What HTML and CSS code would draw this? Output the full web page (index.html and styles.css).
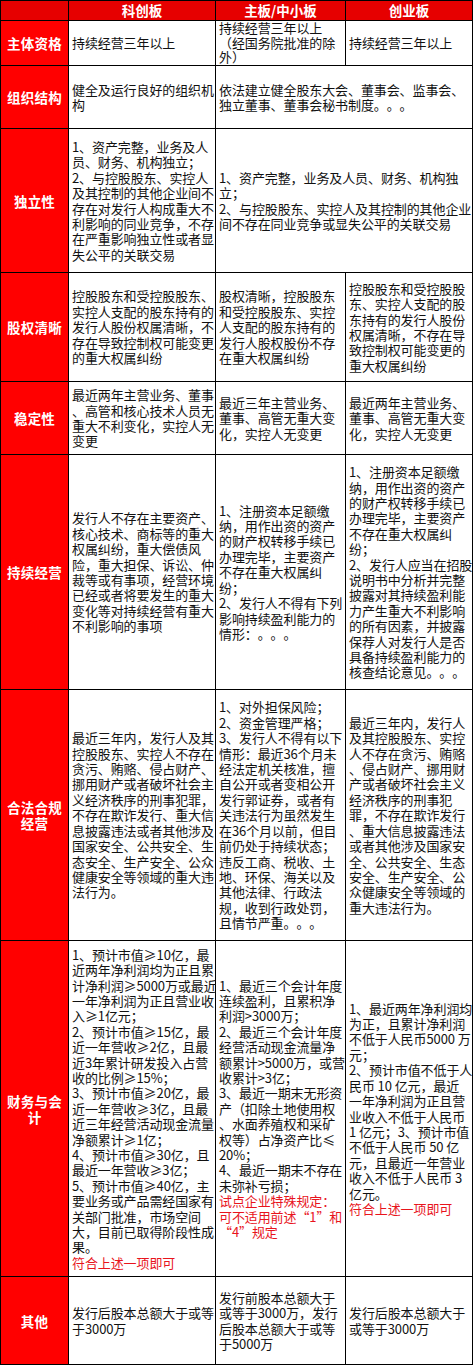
FILE: index.html
```html
<!DOCTYPE html>
<html lang="zh-CN">
<head>
<meta charset="utf-8">
<title>科创板 主板 创业板 对比</title>
<link rel="stylesheet" href="styles.css">
</head>
<body>
<div class="sheet">
  <div class="hd"></div>
  <div class="hd">科创板</div>
  <div class="hd">主板/中小板</div>
  <div class="hd">创业板</div>

  <div class="lbl"><div class="t">主体资格</div></div>
  <div class="c"><div class="t">持续经营三年以上</div></div>
  <div class="c tight"><div class="t">持续经营三年以上<br>（经国务院批准的除<br>外）</div></div>
  <div class="c"><div class="t">持续经营三年以上</div></div>

  <div class="lbl"><div class="t">组织结构</div></div>
  <div class="c"><div class="t">健全及运行良好的组织机<br>构</div></div>
  <div class="c span2"><div class="t">依法建立健全股东大会、董事会、监事会、<br>独立董事、董事会秘书制度。。。</div></div>

  <div class="lbl"><div class="t">独立性</div></div>
  <div class="c"><div class="t">1、资产完整，业务及人<br>员、财务、机构独立；<br>2、与控股股东、实控人<br>及其控制的其他企业间不<br>存在对发行人构成重大不<br>利影响的同业竞争，不存<br>在严重影响独立性或者显<br>失公平的关联交易</div></div>
  <div class="c span2"><div class="t">1、资产完整，业务及人员、财务、机构独<br>立；<br>2、与控股股东、实控人及其控制的其他企业<br>间不存在同业竞争或显失公平的关联交易</div></div>

  <div class="lbl"><div class="t">股权清晰</div></div>
  <div class="c"><div class="t">控股股东和受控股股东、<br>实控人支配的股东持有的<br>发行人股份权属清晰，不<br>存在导致控制权可能变更<br>的重大权属纠纷</div></div>
  <div class="c"><div class="t">股权清晰，控股股东<br>和受控股股东、实控<br>人支配的股东持有的<br>发行人股权股份不存<br>在重大权属纠纷</div></div>
  <div class="c"><div class="t">控股股东和受控股股<br>东、实控人支配的股<br>东持有的发行人股份<br>权属清晰，不存在导<br>致控制权可能变更的<br>重大权属纠纷</div></div>

  <div class="lbl"><div class="t">稳定性</div></div>
  <div class="c"><div class="t">最近两年主营业务、董事<br>、高管和核心技术人员无<br>重大不利变化，实控人无<br>变更</div></div>
  <div class="c"><div class="t">最近三年主营业务、<br>董事、高管无重大变<br>化，实控人无变更</div></div>
  <div class="c"><div class="t">最近两年主营业务、<br>董事、高管无重大变<br>化，实控人无变更</div></div>

  <div class="lbl"><div class="t">持续经营</div></div>
  <div class="c"><div class="t">发行人不存在主要资产、<br>核心技术、商标等的重大<br>权属纠纷，重大偿债风<br>险，重大担保、诉讼、仲<br>裁等或有事项，经营环境<br>已经或者将要发生的重大<br>变化等对持续经营有重大<br>不利影响的事项</div></div>
  <div class="c"><div class="t">1、注册资本足额缴<br>纳，用作出资的资产<br>的财产权转移手续已<br>办理完毕，主要资产<br>不存在重大权属纠<br>纷；<br>2、发行人不得有下列<br>影响持续盈利能力的<br>情形：。。。</div></div>
  <div class="c"><div class="t">1、注册资本足额缴<br>纳，用作出资的资产<br>的财产权转移手续已<br>办理完毕，主要资产<br>不存在重大权属纠<br>纷；<br>2、发行人应当在招股<br>说明书中分析并完整<br>披露对其持续盈利能<br>力产生重大不利影响<br>的所有因素，并披露<br>保荐人对发行人是否<br>具备持续盈利能力的<br>核查结论意见。。。</div></div>

  <div class="lbl"><div class="t">合法合规<br>经营</div></div>
  <div class="c"><div class="t">最近三年内，发行人及其<br>控股股东、实控人不存在<br>贪污、贿赂、侵占财产、<br>挪用财产或者破坏社会主<br>义经济秩序的刑事犯罪，<br>不存在欺诈发行、重大信<br>息披露违法或者其他涉及<br>国家安全、公共安全、生<br>态安全、生产安全、公众<br>健康安全等领域的重大违<br>法行为。</div></div>
  <div class="c"><div class="t">1、对外担保风险；<br>2、资金管理严格；<br>3、发行人不得有以下<br>情形：最近36个月未<br>经法定机关核准，擅<br>自公开或者变相公开<br>发行郭证券，或者有<br>关违法行为虽然发生<br>在36个月以前，但目<br>前仍处于持续状态；<br>违反工商、税收、土<br>地、环保、海关以及<br>其他法律、行政法<br>规，收到行政处罚，<br>且情节严重。。。</div></div>
  <div class="c"><div class="t">最近三年内，发行人<br>及其控股股东、实控<br>人不存在贪污、贿赂<br>、侵占财产、挪用财<br>产或者破坏社会主义<br>经济秩序的刑事犯<br>罪，不存在欺诈发行<br>、重大信息披露违法<br>或者其他涉及国家安<br>全、公共安全、生态<br>安全、生产安全、公<br>众健康安全等领域的<br>重大违法行为。</div></div>

  <div class="lbl"><div class="t">财务与会<br>计</div></div>
  <div class="c"><div class="t">1、预计市值≥10亿，最<br>近两年净利润均为正且累<br>计净利润≥5000万或最近<br>一年净利润为正且营业收<br>入≥1亿元；<br>2、预计市值≥15亿，最<br>近一年营收≥2亿，且最<br>近3年累计研发投入占营<br>收的比例≥15%；<br>3、预计市值≥20亿，最<br>近一年营收≥3亿，且最<br>近三年经营活动现金流量<br>净额累计≥1亿；<br>4、预计市值≥30亿，且<br>最近一年营收≥3亿；<br>5、预计市值≥40亿，主<br>要业务或产品需经国家有<br>关部门批准，市场空间<br>大，目前已取得阶段性成<br>果。<br><span class="red">符合上述一项即可</span></div></div>
  <div class="c"><div class="t">1、最近三个会计年度<br>连续盈利，且累积净<br>利润&gt;3000万；<br>2、最近三个会计年度<br>经营活动现金流量净<br>额累计&gt;5000万，或营<br>收累计&gt;3亿；<br>3、最近一期末无形资<br>产（扣除土地使用权<br>、水面养殖权和采矿<br>权等）占净资产比≤<br>20%；<br>4、最近一期末不存在<br>未弥补亏损；<br><span class="red">试点企业特殊规定：<br>可不适用前述“1”和<br>“4”规定</span></div></div>
  <div class="c"><div class="t">1、最近两年净利润均<br>为正，且累计净利润<br>不低于人民币5000 万<br>元；<br>2、预计市值不低于人<br>民币 10 亿元，最近<br>一年净利润为正且营<br>业收入不低于人民币<br>1 亿元；3、预计市值<br>不低于人民币 50 亿<br>元，且最近一年营业<br>收入不低于人民币 3<br>亿元。<br><span class="red">符合上述一项即可</span></div></div>

  <div class="lbl"><div class="t">其他</div></div>
  <div class="c"><div class="t">发行后股本总额大于或等<br>于3000万</div></div>
  <div class="c"><div class="t">发行前股本总额大于<br>或等于3000万，发行<br>后股本总额大于或等<br>于5000万</div></div>
  <div class="c"><div class="t">发行后股本总额大于<br>或等于3000万</div></div>
</div>
</body>
</html>
```

FILE: styles.css
```css
html, body {
  margin: 0;
  padding: 0;
  background: #ffffff;
}

.sheet {
  width: 471px;
  display: grid;
  grid-template-columns: 67px 146px 129px 126px;
  grid-template-rows: 19px 44px 62px 143px 108px 72px 234px 250px 335px 87px;
  gap: 1px;
  padding: 1px;
  background: #000000;
  font-family: "Noto Sans CJK SC", "Noto Sans", sans-serif;
  text-spacing-trim: space-all;
}

.hd {
  background: #e60000;
  color: #ffffff;
  font-weight: 700;
  font-size: 13.5px;
  line-height: 19px;
  text-align: center;
  white-space: nowrap;
}

.lbl {
  background: #ff0000;
  color: #ffffff;
  font-weight: 700;
  font-size: 13.5px;
  line-height: 16px;
  letter-spacing: 0.2px;
  display: flex;
  align-items: center;
  justify-content: center;
  text-align: center;
  white-space: nowrap;
}

.c {
  background: #ffffff;
  color: #111111;
  font-size: 13px;
  line-height: 15.4px;
  letter-spacing: -0.1px;
  padding: 0 0 0 3px;
  display: flex;
  align-items: center;
  white-space: nowrap;
  overflow: visible;
}

.c.tight {
  line-height: 14.5px;
}

.t {
  display: block;
}

.span2 {
  grid-column: span 2;
}

.red {
  color: #e8141c;
}
```
